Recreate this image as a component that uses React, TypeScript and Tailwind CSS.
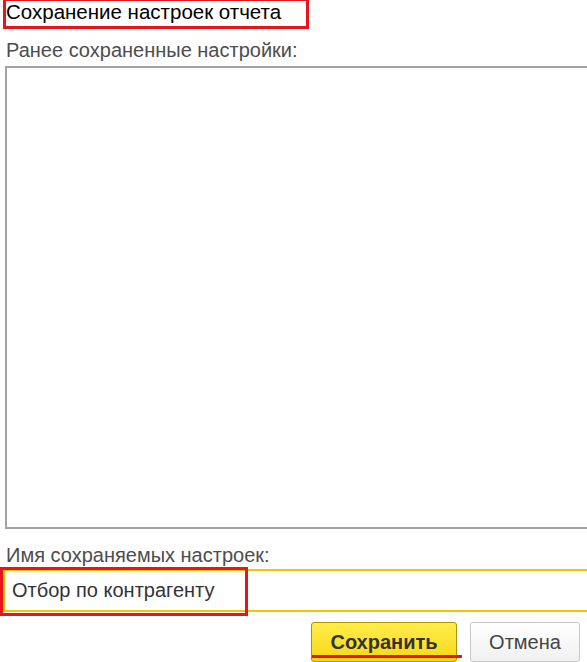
export default function App() {
  return (
    <div className="w-[587px] h-[662px] overflow-hidden bg-white font-['Liberation_Sans',Arial,sans-serif]">
      <div className="ml-[3px] w-[306px] h-[29px] border-x-[3px] border-b-[3px] border-t border-[#e8141c] text-[20.5px] leading-[22px] text-black">
        Сохранение настроек отчета
      </div>

      <div className="mt-[10px] pl-[6px] text-[20px] leading-[23px] text-[#4d4d4d]">
        Ранее сохраненные настройки:
      </div>

      <div className="ml-[5px] mt-[4px] h-[463px] w-[590px] border-2 border-r-0 border-[#a3a3a3] bg-white" />

      <div className="mt-[15px] pl-[6px] text-[20px] leading-[23px] text-[#4d4d4d]">
        Имя сохраняемых настроек:
      </div>

      <div className="relative mt-[2px] ml-[3px]">
        <div className="h-[43px] w-[590px] border-2 border-r-0 border-[#f5c400] pl-[7px] text-[20px] leading-[39px] text-[#333]">
          Отбор по контрагенту
        </div>
        <div className="pointer-events-none absolute left-[-3px] top-[-2px] h-[49px] w-[248px] border-[3px] border-[#e8141c]" />
      </div>

      <div className="mt-[10px] flex justify-end gap-[13px] pr-[7px]">
        <div className="relative">
          <button className="h-[40px] w-[146px] rounded-[3px] border border-[#a89400] bg-gradient-to-b from-[#ffed4a] to-[#f8d800] text-[20px] font-bold text-[#333]">
            Сохранить
          </button>
          <div className="absolute left-[1px] top-[33px] h-[3px] w-[150px] bg-[#e8141c]" />
        </div>
        <button className="h-[40px] w-[110px] rounded-[3px] border border-[#c8c8c8] bg-gradient-to-b from-white to-[#f0f0f0] text-[20px] text-[#444]">
          Отмена
        </button>
      </div>
    </div>
  );
}
